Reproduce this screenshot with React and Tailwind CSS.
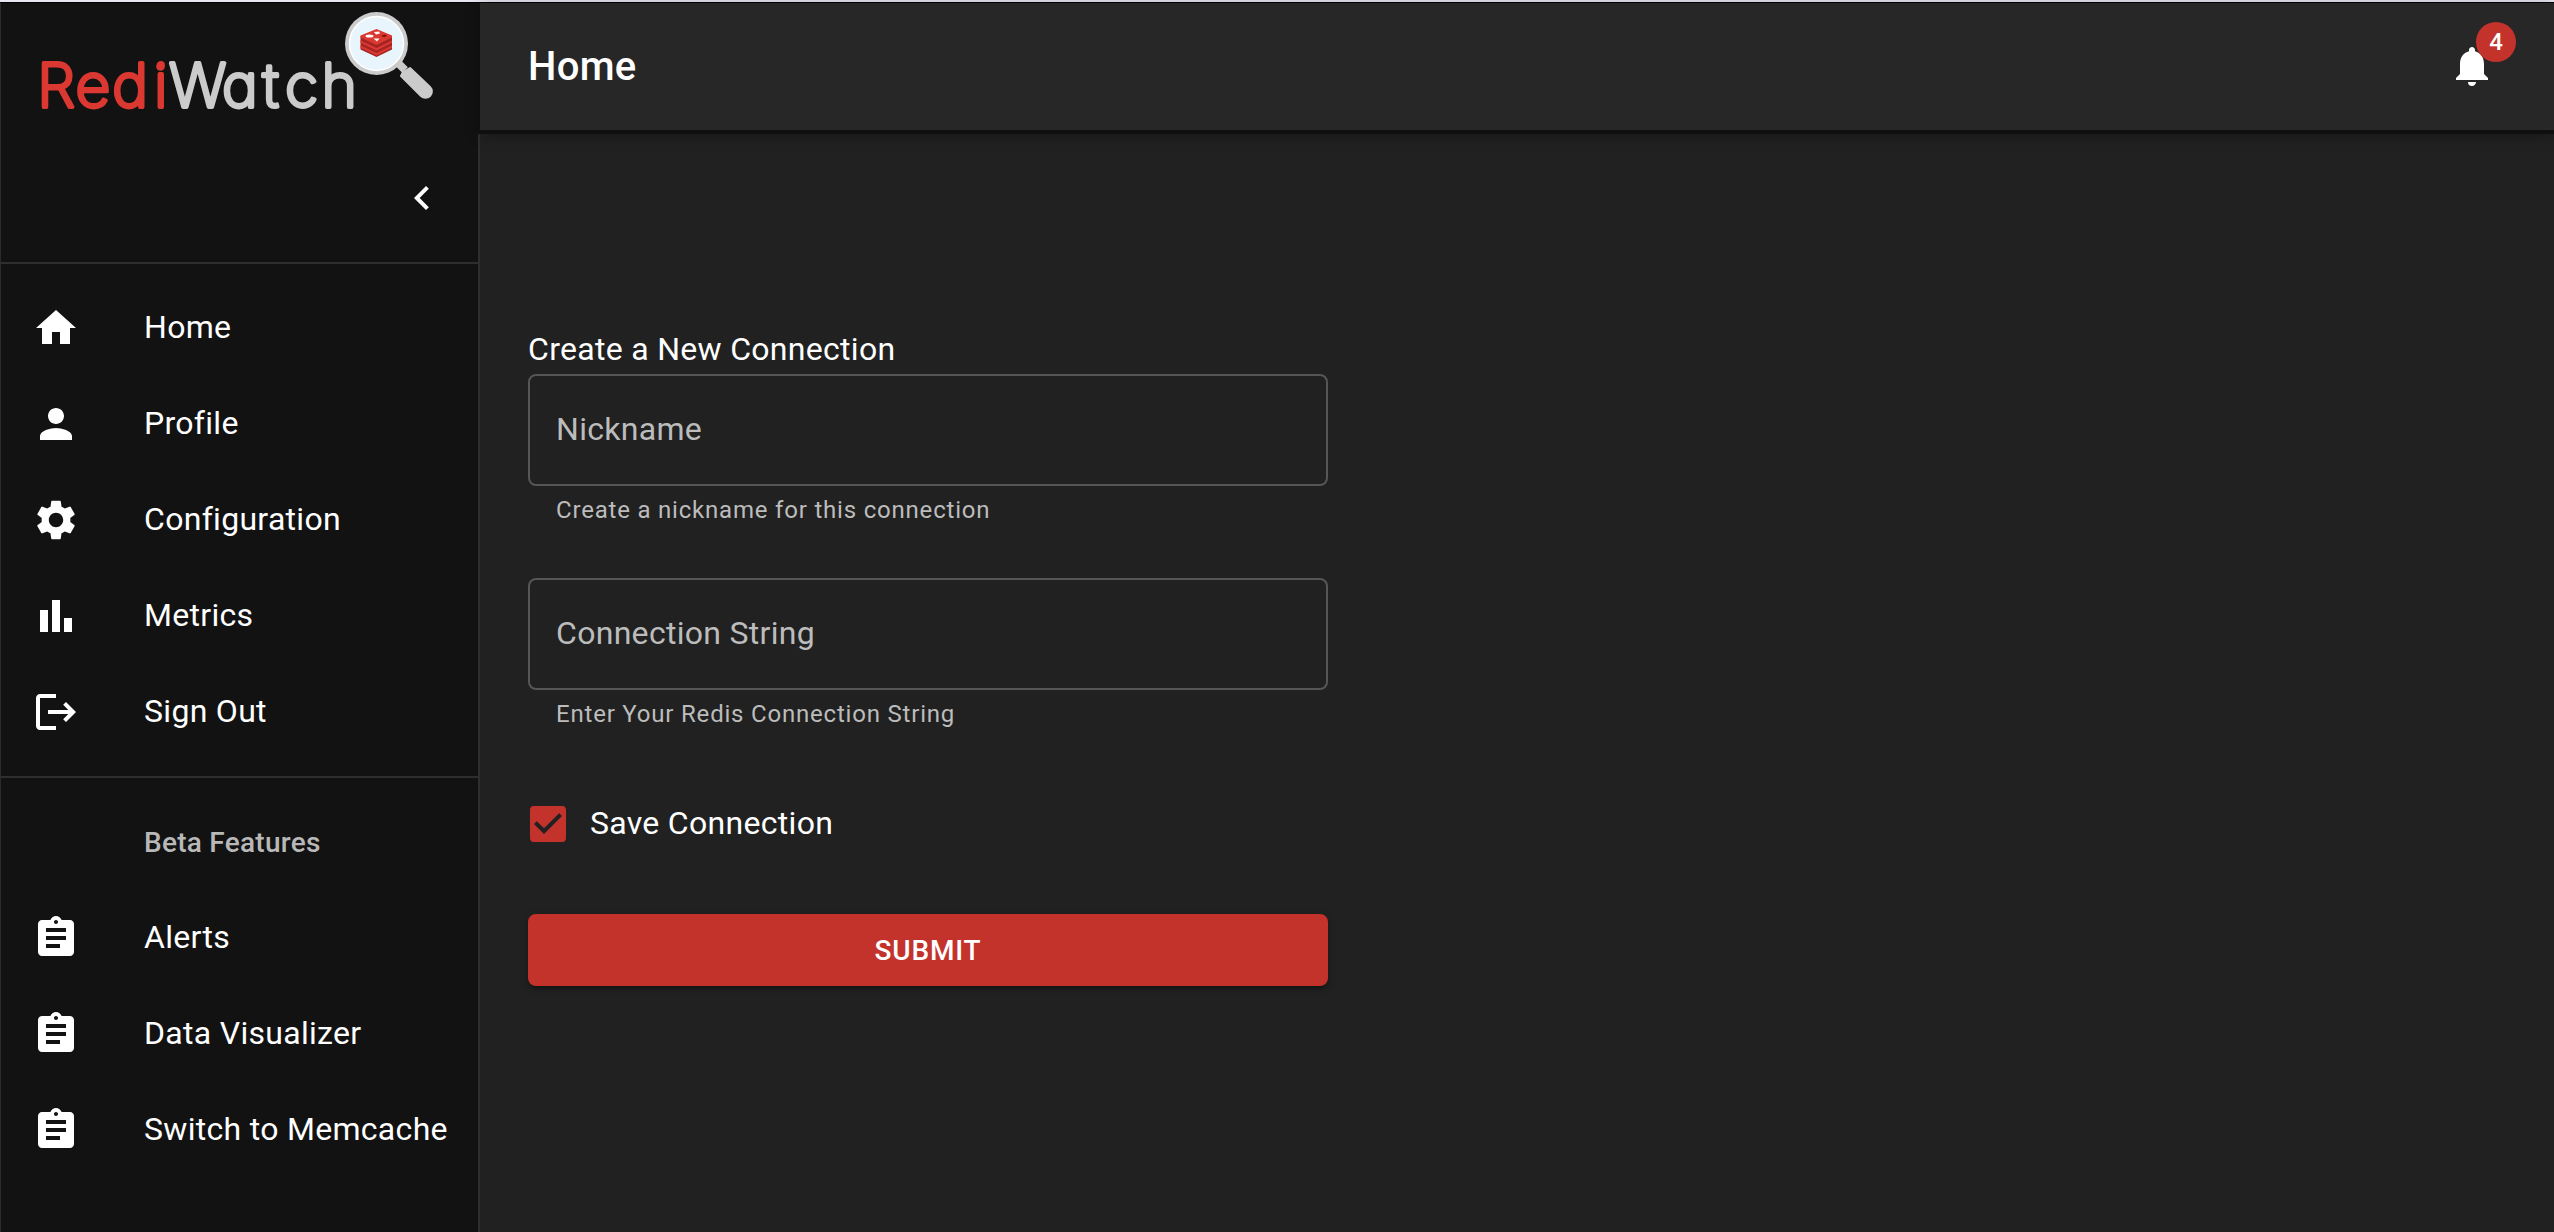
import {
  MdAssignment,
  MdBarChart,
  MdCheckBox,
  MdChevronLeft,
  MdHome,
  MdLogout,
  MdNotifications,
  MdPerson,
  MdSettings,
} from "react-icons/md";

const mainItems = [
  { label: "Home", Icon: MdHome },
  { label: "Profile", Icon: MdPerson },
  { label: "Configuration", Icon: MdSettings },
  { label: "Metrics", Icon: MdBarChart },
  { label: "Sign Out", Icon: MdLogout },
];

const betaItems = [
  { label: "Alerts", Icon: MdAssignment },
  { label: "Data Visualizer", Icon: MdAssignment },
  { label: "Switch to Memcache", Icon: MdAssignment },
];

function NavItem({ label, Icon }) {
  return (
    <li className="flex h-24 items-center pl-[31px]">
      <Icon className="mr-16 size-12 shrink-0" />
      <span className="mb-0.5 whitespace-nowrap text-[32px] leading-12 tracking-[0.3px]">{label}</span>
    </li>
  );
}

function Logo() {
  return (
    <svg width="400" height="104" viewBox="36 6 400 104" className="block overflow-visible">
      <g
        fontFamily="Inter, sans-serif"
        fontWeight="200"
        fontSize="60.5"
        strokeWidth="3.8"
        strokeLinejoin="round"
        strokeLinecap="round"
        style={{ fontFeatureSettings: '"cv11"' }}
      >
        <text x="37.300 75.400 112.300 154" y="107" fill="#dc3832" stroke="#dc3832">Redi</text>
        <text x="169 222 262.500 285 321.500" y="107" fill="#cbcbcb" stroke="#cbcbcb">Watch</text>
      </g>
      <circle cx="160.500" cy="66.500" r="4.300" fill="#dc3832" />
      <path d="M396 61l9 9" stroke="#cbcbcb" strokeWidth="8" />
      <path d="M403 72l7-4 20 19a6 6 0 0 1-9 9l-20-20z" fill="#cbcbcb" stroke="#cbcbcb" strokeWidth="2" strokeLinejoin="round" />
      <circle cx="376.500" cy="43.500" r="31.500" fill="#cbcbcb" />
      <circle cx="376.500" cy="43.500" r="27" fill="#e8f5fc" stroke="#fff" strokeWidth="1.500" />
      <path d="M360.500 36v13.500L376.500 57l15.500-7.500V36z" fill="#a32422" />
      <path d="M360.500 45.500L376.500 53l15.500-7.500v2.300L376.500 55.500l-16-7.700z" fill="#dc3832" />
      <path d="M360.500 40.500L376.500 48l15.500-7.500v2.300L376.500 50.500l-16-7.700z" fill="#dc3832" />
      <path d="M360.500 35.500L376.500 29l15.500 6.500v2L376.500 45l-16-7.500z" fill="#dc3832" />
      <ellipse cx="369.500" cy="36" rx="4" ry="1.600" fill="#fff" />
      <path d="M374 32l5-.5 1 2-4 1zM373.500 38.500h6l-2.500 3z" fill="#fff" />
      <path d="M381 36l4-1.500 2 1.500-3 1z" fill="#7a0c00" />
    </svg>
  );
}

function Sidebar() {
  return (
    <aside className="flex w-[480px] shrink-0 flex-col border-l border-r-2 border-l-[#2c2c2c] border-r-[#2e2e2e] bg-[#121212]">
      <div className="flex h-[259px] flex-col">
        <div className="pl-[35px] pt-[3px]"><Logo /></div>
        <div className="mt-[64px] flex justify-end pr-[32px]">
          <MdChevronLeft className="size-12" />
        </div>
      </div>
      <hr className="h-0.5 border-0 bg-[#2e2e2e]" />
      <ul className="py-4">{mainItems.map((item) => <NavItem key={item.label} {...item} />)}</ul>
      <hr className="h-0.5 border-0 bg-[#2e2e2e]" />
      <ul className="py-4">
        <li className="flex h-24 items-center pl-[143px] pt-px text-[28px] font-medium tracking-[0.26px] text-[#b8b8b8]">Beta Features</li>
        {betaItems.map((item) => <NavItem key={item.label} {...item} />)}
      </ul>
    </aside>
  );
}

function Header() {
  return (
    <header className="relative flex h-[131px] items-center justify-between border-b-4 border-[#0f0f0f] bg-[#272727] pb-px pl-12 pr-[58px] shadow-[0_2px_14px_rgba(0,0,0,0.3)]">
      <span className="absolute -bottom-1 -left-0.5 top-0 w-0.5 bg-[#101010]" />
      <h1 className="pt-0.5 text-[40px] font-medium leading-[64px] tracking-[0.3px]">Home</h1>
      <div className="relative">
        <MdNotifications className="size-12" />
        <span className="absolute -right-5 -top-5 flex size-10 items-center justify-center rounded-full bg-[#c4322c] text-2xl font-medium">4</span>
      </div>
    </header>
  );
}

function Field({ label, help }) {
  return (
    <div>
      <div className="flex h-28 items-center rounded-lg border-2 border-[#565656] px-[26px] pb-0.5 text-[32px] tracking-[0.3px] text-[#bcbcbc]">{label}</div>
      <p className="mt-1 pl-7 text-2xl leading-10 tracking-[0.8px] text-[#bcbcbc]">{help}</p>
    </div>
  );
}

export default function App() {
  return (
    <div className="flex h-[1232px] w-[2554px] flex-col overflow-hidden bg-[#212121] font-[Roboto,sans-serif] text-white">
      <div className="h-[3px] shrink-0 border-b border-black bg-[#e8e7f2]" />
      <div className="flex min-h-0 flex-1">
        <Sidebar />
        <div className="flex-1">
          <Header />
          <main className="ml-12 mt-[191px] w-[800px]">
            <h2 className="text-[32px] leading-12 tracking-[0.3px]">Create a New Connection</h2>
            <div className="mt-px flex flex-col gap-[48px]">
              <Field label="Nickname" help="Create a nickname for this connection" />
              <Field label="Connection String" help="Enter Your Redis Connection String" />
            </div>
            <label className="-ml-1 mt-[66px] flex h-12 items-center gap-[18px] text-[32px] tracking-[0.3px]">
              <MdCheckBox className="size-12 text-[#c4322c]" />
              <span className="-mt-0.5">Save Connection</span>
            </label>
            <button className="mt-[66px] h-[72px] w-full rounded-lg bg-[#c4322c] pt-px text-[28px] font-medium tracking-[0.8px] shadow-[0_6px_2px_-4px_rgba(0,0,0,0.2),0_4px_4px_rgba(0,0,0,0.14),0_2px_10px_rgba(0,0,0,0.12)]">
              SUBMIT
            </button>
          </main>
        </div>
      </div>
    </div>
  );
}
